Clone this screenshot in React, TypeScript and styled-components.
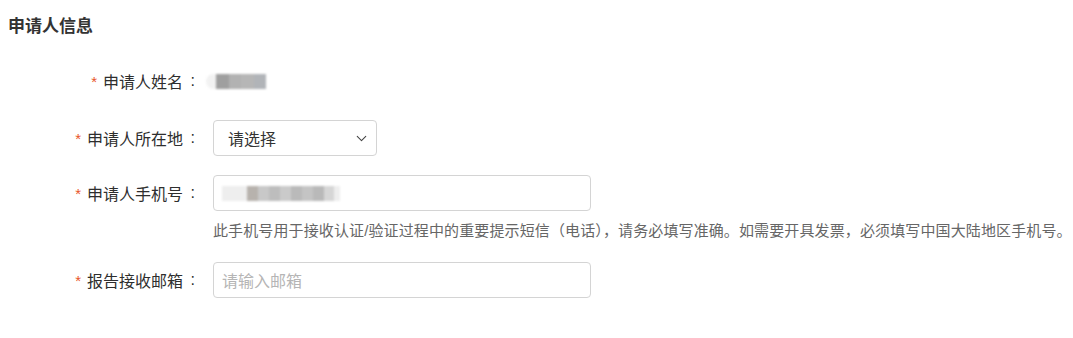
import React from "react";
import styled, { createGlobalStyle } from "styled-components";
import { ChevronDown } from "lucide-react";

const GlobalStyle = createGlobalStyle`
  body {
    margin: 0;
    background: #fff;
    font-family: "Liberation Sans", "Noto Sans CJK SC", sans-serif;
    color: #333;
  }
`;

const Page = styled.div`
  padding: 15px 8px 0;
  width: 1073px;
  box-sizing: border-box;
`;

const Title = styled.h3`
  margin: 0 0 24px;
  font-size: 17px;
  line-height: 24px;
  font-weight: 700;
  color: #333;
`;

const Row = styled.div<{ $gap?: number }>`
  display: grid;
  grid-template-columns: 187px 1fr;
  column-gap: 18px;
  align-items: start;
  margin-bottom: ${(p) => p.$gap ?? 20}px;
`;

const Label = styled.label`
  display: flex;
  justify-content: flex-end;
  align-items: center;
  height: 36px;
  font-size: 16px;
  color: #2e2e2e;
  white-space: nowrap;
`;

const Star = styled.span`
  color: #e8542a;
  font-size: 15px;
  margin-right: 6px;
  position: relative;
  top: 0px;
`;

const Colon = styled.span`
  display: inline-block;
  width: 12px;
  text-align: right;
`;

const Field = styled.div`
  display: flex;
  flex-direction: column;
  gap: 8px;
`;

const Plain = styled.div`
  height: 36px;
  display: flex;
  align-items: center;
  margin-left: -7px;
`;

const Blur = styled.div<{ $bg?: string; $pad?: number }>`
  display: flex;
  align-items: center;
  height: 15px;
  border-radius: 8px;
  background: ${(p) => p.$bg ?? "#f2f2f2"};
  padding-left: ${(p) => p.$pad ?? 10}px;
  filter: blur(0.8px);
`;

const Block = styled.span<{ $c: string; $w: number }>`
  display: inline-block;
  width: ${(p) => p.$w}px;
  height: 15px;
  background: ${(p) => p.$c};
`;

const SelectBox = styled.div`
  box-sizing: border-box;
  width: 164px;
  height: 36px;
  border: 1px solid #d4d4d4;
  border-radius: 4px;
  display: flex;
  align-items: center;
  justify-content: space-between;
  padding: 0 6px 0 14px;
  font-size: 16px;
  color: #333;
`;

const Input = styled.div<{ $placeholder?: boolean }>`
  box-sizing: border-box;
  width: 378px;
  height: 36px;
  border: 1px solid #d4d4d4;
  border-radius: 4px;
  display: flex;
  align-items: center;
  padding: 0 8px;
  font-size: 16px;
  color: ${(p) => (p.$placeholder ? "#b5b5b5" : "#333")};
`;

const Help = styled.div`
  font-size: 15px;
  line-height: 24px;
  letter-spacing: 0.12px;
  color: #666;
  white-space: nowrap;
`;

const nameBlocks = [
  { c: "#9f9f9f", w: 13 },
  { c: "#b2b2b2", w: 12 },
  { c: "#b6b6b6", w: 13 },
  { c: "#b1b4b8", w: 12 },
];

const phoneBlocks = [
  { c: "#eeeeee", w: 25 },
  { c: "#b7b2ad", w: 11 },
  { c: "#c8c8c8", w: 11 },
  { c: "#bdbdbd", w: 11 },
  { c: "#cacaca", w: 11 },
  { c: "#bababa", w: 11 },
  { c: "#c4c4c4", w: 11 },
  { c: "#b9b9b9", w: 11 },
  { c: "#d6d6d6", w: 10 },
  { c: "#eeeeee", w: 6 },
];

const FormLabel: React.FC<{ text: string }> = ({ text }) => (
  <Label>
    <Star>*</Star>
    {text}
    <Colon>:</Colon>
  </Label>
);

export default function App() {
  return (
    <>
      <GlobalStyle />
      <Page>
        <Title>申请人信息</Title>
        <Row $gap={21}>
          <FormLabel text="申请人姓名" />
          <Plain>
            <Blur>
              {nameBlocks.map((b, i) => (
                <Block key={i} $c={b.c} $w={b.w} />
              ))}
            </Blur>
          </Plain>
        </Row>
        <Row $gap={19}>
          <FormLabel text="申请人所在地" />
          <SelectBox>
            请选择
            <ChevronDown size={17} strokeWidth={1.5} color="#444" />
          </SelectBox>
        </Row>
        <Row $gap={19}>
          <FormLabel text="申请人手机号" />
          <Field>
            <Input>
              <Blur $bg="#f0f0f0" $pad={0}>
                {phoneBlocks.map((b, i) => (
                  <Block key={i} $c={b.c} $w={b.w} />
                ))}
              </Blur>
            </Input>
            <Help>
              此手机号用于接收认证/验证过程中的重要提示短信（电话），请务必填写准确。如需要开具发票，必须填写中国大陆地区手机号。
            </Help>
          </Field>
        </Row>
        <Row>
          <FormLabel text="报告接收邮箱" />
          <Input $placeholder>请输入邮箱</Input>
        </Row>
      </Page>
    </>
  );
}
